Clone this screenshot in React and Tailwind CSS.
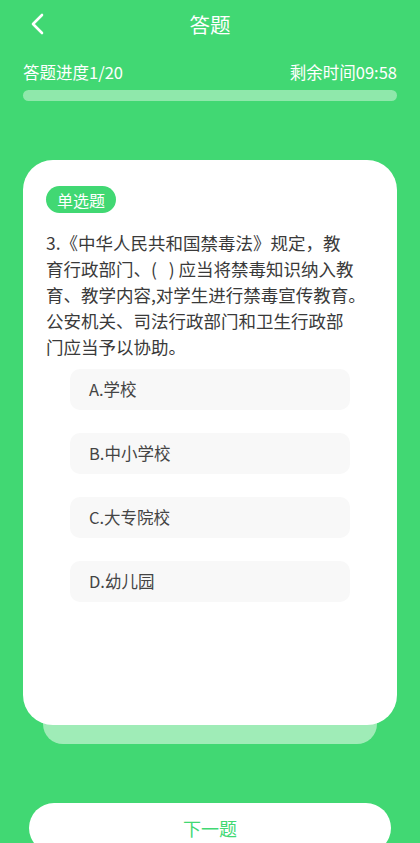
import React from "react";

const options = ["A.学校", "B.中小学校", "C.大专院校", "D.幼儿园"];

const questionLines = [
  "3.《中华人民共和国禁毒法》规定，教",
  "育行政部门、(   ) 应当将禁毒知识纳入教",
  "育、教学内容,对学生进行禁毒宣传教育。",
  "公安机关、司法行政部门和卫生行政部",
  "门应当予以协助。",
];

export default function App() {
  return (
    <div
      className="w-[420px] h-[843px] bg-[#41d873] overflow-hidden flex flex-col"
      style={{ fontFamily: '"Noto Sans CJK SC", "Noto Sans", sans-serif' }}
    >
      {/* Header */}
      <header className="relative h-[48px] flex items-center justify-center">
        <button className="absolute left-[28px] top-[12px] text-white">
          <svg width="20" height="24" viewBox="0 0 20 24" fill="none" stroke="currentColor" strokeWidth="2.6" strokeLinecap="round" strokeLinejoin="round">
            <path d="M14 3 L5 12 L14 21" />
          </svg>
        </button>
        <h1 className="text-white text-[20.5px] leading-none">答题</h1>
      </header>

      {/* Progress */}
      <div className="px-[23px] mt-[13px]">
        <div className="flex justify-between items-center text-white text-[16.5px] leading-[22px]">
          <span>答题进度1/20</span>
          <span>剩余时间09:58</span>
        </div>
        <div className="mt-[7px] h-[11px] rounded-full bg-[#8fe8ab]" />
      </div>

      {/* Card stack */}
      <div className="mt-[59px] px-[23px]">
        <div className="relative z-10 h-[565px] bg-white rounded-[30px] px-[23px] pt-[26px]">
          <span className="inline-flex items-center h-[27px] px-[11px] rounded-full bg-[#41d873] text-white text-[16px]">
            单选题
          </span>
          <p className="mt-[17px] text-[17.5px] leading-[26px] text-[#3a3a3a] whitespace-pre">
            {questionLines.map((l, i) => (
              <span key={i} className="block">{l}</span>
            ))}
          </p>
          <div className="mt-[9px] px-[24px] flex flex-col gap-[23px]">
            {options.map((o) => (
              <div key={o} className="h-[41px] rounded-[10px] bg-[#f8f8f8] flex items-center pl-[19px] text-[16.5px] text-[#444]">
                {o}
              </div>
            ))}
          </div>
        </div>
        <div className="mx-[20px] -mt-[20px] h-[39px] rounded-b-[20px] bg-[#9fecb7]" />
      </div>

      {/* Next button */}
      <div className="mt-auto px-[29px]">
        <button className="w-full h-[50px] translate-y-[10px] bg-white rounded-full text-[#41d873] text-[18px]">
          下一题
        </button>
      </div>
    </div>
  );
}
